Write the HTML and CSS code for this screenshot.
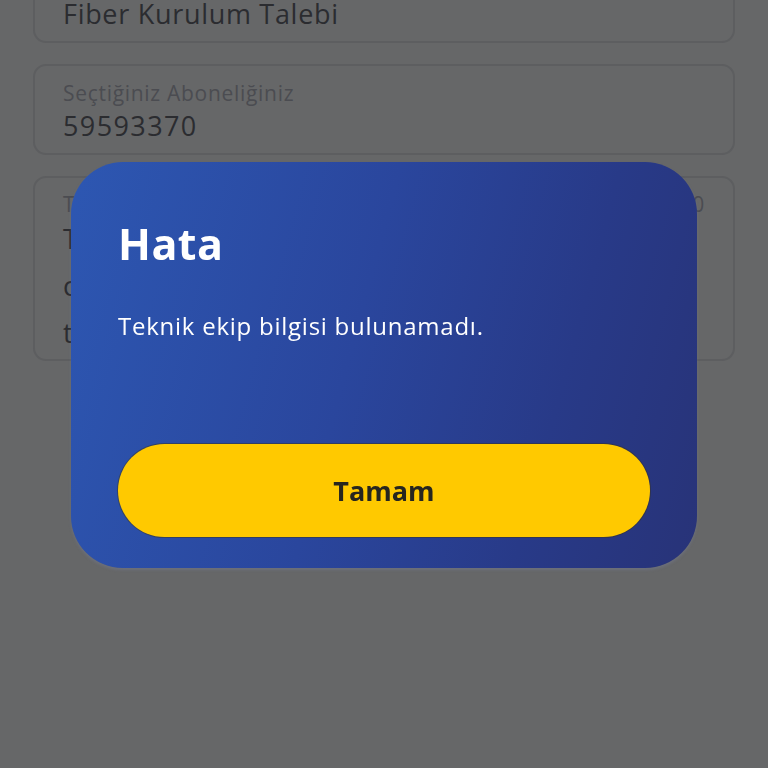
FILE: index.html
```html
<!DOCTYPE html>
<html lang="tr">
<head>
<meta charset="utf-8">
<title>Hata</title>
<link rel="stylesheet" href="styles.css">
</head>
<body>
<main class="page">
  <section class="field">
    <div class="field-label">Talep Türü</div>
    <div class="field-value">Fiber Kurulum Talebi</div>
  </section>
  <section class="field">
    <div class="field-label">Seçtiğiniz Aboneliğiniz</div>
    <div class="field-value number">59593370</div>
  </section>
  <section class="field field-tall">
    <div class="field-head">
      <div class="field-label">Talep Notu</div>
      <div class="field-label">0/500</div>
    </div>
    <div class="field-value multi">Tesisat durumu hakkında ek bilgi<br>cihaz konumu gibi detayları<br>talebinize ekleyebilirsiniz.</div>
  </section>
</main>
<div class="overlay">
  <div class="dialog" role="alertdialog">
    <h1 class="dialog-title">Hata</h1>
    <p class="dialog-text">Teknik ekip bilgisi bulunamadı.</p>
    <button class="dialog-btn">Tamam</button>
  </div>
</div>
</body>
</html>
```
FILE: styles.css
```css
html, body {
  margin: 0;
  padding: 0;
  height: 100%;
}
body {
  background: #666768;
  font-family: "Open Sans", "Noto Sans", sans-serif;
  overflow: hidden;
}
.page {
  display: flex;
  flex-direction: column;
  gap: 21px;
  padding: 0 33px;
  margin-top: -48px;
}
.field {
  box-sizing: border-box;
  border: 2px solid #5d5e60;
  border-radius: 13px;
  padding: 14px 28px 0;
  height: 91px;
  display: flex;
  flex-direction: column;
}
.field-tall {
  height: 185px;
  padding-top: 13px;
}
.field-head {
  display: flex;
  justify-content: space-between;
}
.field-label {
  color: #4b4c51;
  font-size: 21px;
  letter-spacing: 0.7px;
  line-height: 26px;
}
.field-value {
  color: #2b2c30;
  font-size: 27px;
  letter-spacing: 0.7px;
  line-height: 34px;
  margin-top: 3px;
}
.number {
  letter-spacing: 1.4px;
}
.multi {
  line-height: 47px;
  margin-top: -2px;
}
.overlay {
  position: fixed;
  inset: 0;
  display: flex;
  justify-content: center;
  align-items: flex-start;
  padding-top: 162px;
}
.dialog {
  width: 626px;
  box-sizing: border-box;
  padding: 58px 47px 31px;
  border-radius: 52px;
  background: linear-gradient(105deg, #2d57b2 0%, #2a469d 45%, #283a88 75%, #283378 100%);
  box-shadow: 0 2px 3px rgba(120, 130, 160, 0.35);
  display: flex;
  flex-direction: column;
}
.dialog-title {
  margin: 0;
  color: #ffffff;
  font-size: 43px;
  letter-spacing: 0.5px;
  line-height: 48px;
  font-weight: 700;
}
.dialog-text {
  margin: 43px 0 0;
  color: #ffffff;
  font-size: 24px;
  letter-spacing: 0.75px;
  line-height: 30px;
}
.dialog-btn {
  margin-top: 103px;
  height: 93px;
  border: none;
  border-radius: 47px;
  background: #ffc900;
  box-shadow: 0 0 0 1px rgba(60, 50, 20, 0.45);
  color: #27261f;
  font-family: inherit;
  font-size: 27px;
  font-weight: 700;
  cursor: pointer;
}
```
